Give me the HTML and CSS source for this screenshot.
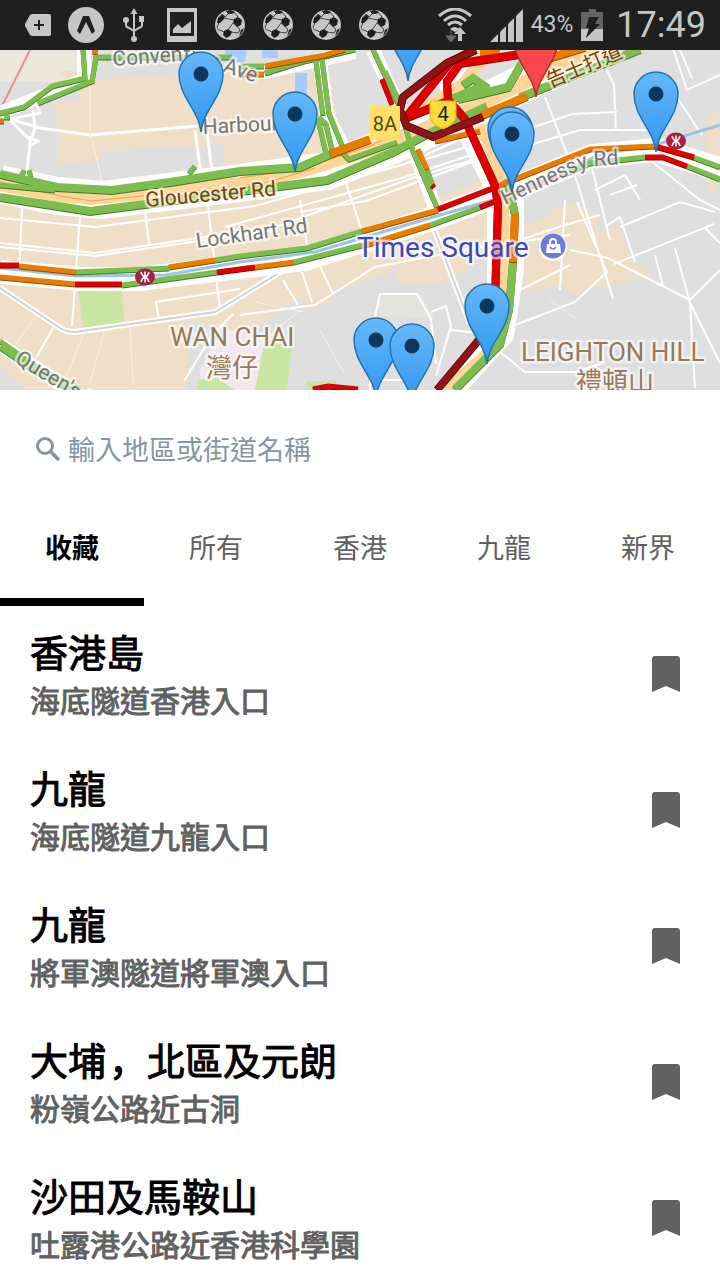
FILE: index.html
```html
<!DOCTYPE html>
<html lang="zh-Hant-HK">
<head>
<meta charset="utf-8">
<meta name="viewport" content="width=device-width, initial-scale=1">
<title>交通</title>
<link rel="stylesheet" href="styles.css">
</head>
<body>
<svg class="defs" width="0" height="0" aria-hidden="true">
  <defs>
    <symbol id="ball" viewBox="0 0 30 30">
      <circle cx="15" cy="15" r="15" fill="#c6c6c6"/>
      <g fill="#1f1f1f">
        <path d="M19 9l4-2 4 3-1 5-4 2-4-4z"/>
        <path d="M9 21l4-2 4 3-2 4-4 2-3-3z"/>
        <path d="M11 1l5-1 4 2-3 2-4 0zM3 8l4-4 3 2-1 3-4 4-3 0zM26 20l3-2-2 5-3 3z"/>
      </g>
      <path d="M9 8l10 2M23 7l-4-5M18 13l-5 7M9 22l-7-3M4 12l-2 6M22 16l3 4M16 22l7 1 2-3M14 3l-4 4" fill="none" stroke="#1f1f1f" stroke-width="0.800"/>
    </symbol>
    <symbol id="bookmark" viewBox="0 0 28 36">
      <path d="M3 0h22a3 3 0 0 1 3 3v33l-14-6-14 6V3a3 3 0 0 1 3-3z" fill="#616161"/>
    </symbol>
    <linearGradient id="blue" x1="0" y1="0" x2="0" y2="1"><stop offset="0" stop-color="#66b8fb"/><stop offset="1" stop-color="#2f98f0"/></linearGradient>
    <g id="pin">
      <path d="M0 0C-2-22-22-35-22-58A22 22 0 0 1 22-58C22-35 2-22 0 0z" fill="url(#blue)" stroke="#2273b0" stroke-width="1.5"/>
      <circle cy="-58" r="7.5" fill="#10375a"/>
    </g>
    <g id="metro">
      <ellipse rx="10" ry="8.500" fill="#a91e45"/>
      <path d="M0-5.500V5.500M-4-5Q-3-1 0 0Q3-1 4-5M-4 5Q-3 1 0 0Q3 1 4 5" fill="none" stroke="#fff" stroke-width="1.5"/>
    </g>
    <path id="hennessy" d="M505 205L573 173Q584 167 596 166L640 163"/>
    <path id="convention" d="M113 66L180 61Q196 61 208 66L262 85"/>
  </defs>
</svg>

<header class="status">
  <div class="notices">
    <svg width="26" height="22" viewBox="0 0 26 22"><path d="M7 0h17a2 2 0 0 1 2 2v18a2 2 0 0 1-2 2H7l-2-1-5-9v-2l5-9z" fill="#c6c6c6"/><path d="M14 6v10M9 11h10" stroke="#1f1f1f" stroke-width="2"/></svg>
    <svg width="36" height="36" viewBox="0 0 36 36"><circle cx="18" cy="18" r="18" fill="#c6c6c6"/><path d="M15 9h6l6 15-3 3-6-12-6 12-3-3z" fill="#1f1f1f"/></svg>
    <svg width="22" height="34" viewBox="0 0 22 34"><path d="M11 0l3.500 6h-7z" fill="#c6c6c6"/><path d="M11 4v26M3 13v4q0 2 3 3l5 3M19 11v6q0 2-3 3l-5 3" fill="none" stroke="#c6c6c6" stroke-width="2"/><circle cx="3" cy="12" r="3" fill="#c6c6c6"/><path d="M16 8h5v6h-5z" fill="#c6c6c6"/><circle cx="11" cy="31" r="3" fill="#c6c6c6"/></svg>
    <svg width="30" height="34" viewBox="0 0 30 34"><path d="M0 0h30v34H0zM3 4v24h24V4z" fill="#c6c6c6" fill-rule="evenodd"/><path d="M5 5h20v21H5z" fill="#1f1f1f"/><path d="M6 25v-4l5-5 4 4 9-7v12z" fill="#c6c6c6"/></svg>
    <svg width="30" height="30"><use href="#ball"/></svg>
    <svg width="30" height="30"><use href="#ball"/></svg>
    <svg width="30" height="30"><use href="#ball"/></svg>
    <svg width="30" height="30"><use href="#ball"/></svg>
  </div>
  <div class="system">
    <svg class="wifi" width="34" height="34" viewBox="0 0 34 34"><g fill="none" stroke="#c6c6c6" stroke-width="3"><path d="M1 8q16-14 32 0M6 13q11-10 22 0M10 17q7-6 14 0"/></g><path d="M12 21q5-4 9 0l-4 3z" fill="#c6c6c6"/><path d="M13 22v7M8 28h10l-5 6z" fill="#6c6c6c" stroke="#6c6c6c" stroke-width="1"/><path d="M22 19l6 7h-4v7h-4v-7h-4z" fill="#c6c6c6"/></svg>
    <svg width="33" height="33" viewBox="0 0 33 33"><path d="M0 33l8-8v8zM10 23l6-6v16h-6zM18 15l6-6v24h-6zM26 7l7-7v33h-7z" fill="#c6c6c6"/></svg>
    <span class="percent">43%</span>
    <svg class="battery" width="22" height="32" viewBox="0 0 22 32"><path d="M8 0h7v3h7v29H0V3h8z" fill="#656565"/><path d="M0 20h22v12H0z" fill="#c6c6c6"/><path d="M8 8h10l-4 7h5L5 29l3-10H5z" fill="#1f1f1f"/></svg>
    <time class="clock">17:49</time>
  </div>
</header>

<svg class="map" viewBox="0 50 720 340" role="img" aria-label="地圖">
  <rect y="50" width="720" height="340" fill="#dfdfdf"/>
  <!-- land use -->
  <path d="M0 50h83v27L58 82 0 82z" fill="#ebe7da"/>
  <g fill="#f0dfc8">
    <path d="M59 71h21v10l160-12 90 10 10 62-30 20-86 12V144L100 152v8l-42 4-2-62 24-1V90z"/>
    <path d="M0 205l90 12 240-30 75-30 85 15V250l-10 8-37 25h-43l-5-13-62 23v9l-20 6-16-10-37 27-10 15-60-20-3 73H32L0 368z"/>
    <path d="M520 228l40-15 37 2v17l23-4 12 32 21 16-58 11-15 10-20-12-35 6zM705 115l15-3v58l-5 26-7-6zM550 210l25-6 25 13-45 10z"/>
  </g>
  <path d="M418 152l72 -25v50l-50 20z" fill="#dfdfdf"/>
  <path d="M375 305l10-10h36l13 23-52-1z" fill="#e4e4de"/>
  <path d="M200 370l12-26 18-14 35 8-5 52h-60z" fill="#f3e6ee"/>
  <path d="M78 289h44l2 35-41 4zM265 338l27 10-5 42h-32zM306 381h30v9h-30zM197 380l20-2 18 12h-38z" fill="#cae6a4"/>
  <path d="M295 73h12v22h-12zM225 50h22l-2 12h-18zM262 50h16v8h-16z" fill="#a5cbff"/>
  <!-- side streets -->
  <g fill="none" stroke="#fff" stroke-width="2">
    <path d="M10 119l30 9 50 7 108-9M10 119l30-6-4-9M28 137l10 4-8 5M33 110l2 18-5 14-3 30" stroke-width="3"/>
    <path d="M10 120l20 20M195 130l6 45M207 132l5 40" stroke-width="3"/>
    <path d="M0 218l95 9 160-21 150-42 90-40M0 243l95 10 180-26 140-50 75-22M0 247l95 9 180-26M22 208l-3 70M80 216l-8 110M145 210l4 34M208 205l12 105M300 200l7 45M345 180l20 60M480 152l-75 25-180 50"/>
    <path d="M155 302l85-13M156 302l3 18M300 212l66-11 114-42M53 328l-17 30M184 381l29-47 20-20M283 280l15 25M302 272l10 30M318 262l15 32M240 315l75-10 60-38 105-20 90-12"/>
    <path d="M400 118l16 44 74-22M0 345l40 20M370 390v-50l10-46h37l14 25 5 45M431 312l15-6 5 20-15 50M380 380h40M450 330l30 3"/>
    <path d="M510 327l65-25 32-30-30-70M520 240l45-15 35-10M520 290l40-20 10-5M565 200l-5 90M570 250l38 8 82 42M614 264l100-40M655 255l8 31M675 248l15 55 5 85M690 300l30-30M705 228l15 15M690 303l30 60M620 227l60-25 35 10M595 190l30-15 15 25M605 227l15-10 15 45"/>
    <path d="M545 97l28 72 40 130M520 132l52-18 45-2M530 145l50-15h70l5-18M607 70l7 15 2 45M720 75l-33 15-30-90M672 90l30 45M590 160l20 80M610 195l27-10M680 50l12 28M650 160l50 40 20 10M500 352l25 20h50l30-10"/>
  </g>
  <g fill="none" stroke="#f9efe2">
    <path d="M90 78v55l12 48M40 310l-35 50M85 330l-20 50M105 328l-15 55M130 325l3 60M300 310l-60 50M305 312l-50-10M320 330l25 45M575 318l-25-18"/>
  </g>
  <g fill="none">
    <path d="M0 288l60 40q6 4 15 4l140-20 90-55M433 226l37 98" stroke="#fff" stroke-width="6"/>
    <path d="M0 288l60 40q6 4 15 4l140-20 90-55M433 226l37 98" stroke="#d4d2cf" stroke-width="2"/>
    <path d="M30 50L0 110" stroke="#e98b90" stroke-width="2"/>
  </g>
  <!-- casings -->
  <g fill="none" stroke="#fff">
    <path d="M0 184l57 12 45 4 138-17 87-12 70-28 83-38 60-30 60-25" stroke-width="38"/>
    <path d="M0 272l80 7h60l165-20 130-41 65-24 92-38 65-6 65 20" stroke-width="24"/>
    <path d="M460 62l-12 20 3 20 45 90v100l-10 50-42 48M515 190v80l-10 65-50 55" stroke-width="18"/>
    <path d="M84 50v30L45 95 0 113M240 70l25 2 90-20M320 60l7 55 15 30M373 50l25 55 38 105M0 345l70 45" stroke-width="14"/>
  </g>
  <g fill="none" stroke="#ffd599">
    <path d="M0 184l57 11 35 3 148-14 60-13 95-29 90-40 60-30 80-30" stroke-width="14"/>
    <path d="M480 125l24 60v105l-14 60-45 40M410 115l50-30 30-30" stroke-width="10"/>
  </g>
  <path d="M0 182l60 14 32 5 118-12 55-6 50-15M240 178l60-9 70-23 40-20" fill="none" stroke="#e6a845"/>
  <path d="M0 268l76 8 90-1 74-13 75-10 125-37 60-17 102-44 53-9 65-20" fill="none" stroke="#9dc3e6" stroke-width="3"/>
  <!-- traffic -->
  <g fill="none">
    <g class="green-edge"><g id="green-wide" class="wide"><path d="M0 175l57 13 55 3 58-8 70-11 60-4 30-13"/><path d="M0 198l90 14 55-7 95-13 87-11 66-28 34-18 60-28"/><path d="M440 105l40-17M458 100l50-12 20-35M520 98l70-28 50-20M463 86l10-7 12 8-5 10"/><path d="M507 180l8 35M513 263l-4 47-9 35-45 45"/></g>
    <g id="green-thin" class="thin"><path d="M0 186l55 5M83 50l2 29-33 8-28 21-24 6M112 58H96l-4 24-54 22M112 58h120M240 67h24M265 74l35-11 55-13M316 62l7 54M322 60l7 54 13 32M318 120l9 38M319 118l7 7 6 25M341 152l8 8 48-17M373 50l25 54 15 48 24 56M385 72l16 34M427 170l6 17M4 118h6M21 178l3-7M31 178l-2-7M189 174l6-7M0 342l40 28 40 20M0 348l35 24 35 18"/><path d="M76 273l93-4M215 261l25-4 67-8 55-17M122 286l95-13M294 263l68-17M430 226l50-18M565 175l25-11 55-6M687 167l33 13M693 158l27 10"/></g></g>
    <g class="green-fill"><use href="#green-wide"/><use href="#green-thin"/></g>
    <g class="orange-edge"><g id="orange-all"><path class="wide" d="M330 155l40-15M515 215l-2 48M480 117l47-20M480 55h20M545 60l40-12"/><path class="thin" d="M0 122h4M95 50v5M240 75h24M265 67l60-11 20-6M418 150l9 20M19 267l57 6M169 268l46-7M362 232l76-21M500 186l90-36 65-3M0 278l75 7M255 268l39-5M362 247l68-21M480 132l-45 10"/></g></g>
    <g class="orange-fill"><use href="#orange-all"/></g>
    <g class="red-edge"><g id="red-all"><path class="wide" d="M405 119l40-16M405 119l45-56 25-13M520 55l-40 6-20 3-13 18 1 18 17 20 30 66 3 20-3 95-8 50"/><path class="thin" d="M382 80l10 25M432 186l2 2M0 266h19M438 210l57-22M75 285h47M217 273l38-5M480 208l20-8M655 147l39 11M645 158h18l24 9M313 390l15-3 30 3"/></g></g>
    <g class="red-fill"><use href="#red-all"/></g>
    <path d="M502 198l62-23" stroke="#ee8d90" stroke-width="5"/>
    <path d="M476 50l-29 13-44 34-3 13 7 16 26 11 50-20M483 335l-46 55" stroke="#5d0b0b" stroke-width="8"/>
    <path d="M476 50l-29 13-44 34-3 13 7 16 26 11 50-20M483 335l-46 55" stroke="#911315" stroke-width="6"/>
  </g>
  <!-- labels -->
  <g class="street">
    <text><textPath href="#convention">Convention Ave</textPath></text>
    <text x="203" y="134" transform="rotate(-3 203 134)">Harbour Rd</text>
    <text x="197" y="248" transform="rotate(-8 197 248)">Lockhart Rd</text>
    <text><textPath href="#hennessy">Hennessy Rd</textPath></text>
    <text x="14" y="362" transform="rotate(31 14 362)">Queen's Rd E</text>
    <text class="highway" x="146" y="207" transform="rotate(-5 146 207)">Gloucester Rd</text>
    <text class="highway-zh" x="550" y="88" transform="rotate(-23 550 88)">告士打道</text>
  </g>
  <g class="district">
    <text x="170" y="346">WAN CHAI</text>
    <text x="206" y="377">灣仔</text>
    <text x="521" y="361">LEIGHTON HILL</text>
    <text x="576" y="391">禮頓山</text>
  </g>
  <text class="place" x="357" y="257">Times Square</text>
  <circle cx="553" cy="247" r="14" fill="#fff"/><circle cx="553" cy="246" r="12.500" fill="#6b7be0"/>
  <path d="M547 244h13l1 9h-15z" fill="#fff"/><path d="M550 245v-3q0-3 3-3t3 3v3" fill="none" stroke="#fff" stroke-width="2"/><path d="M550 247q3 4 6 0" fill="none" stroke="#6b7be0" stroke-width="1.500"/>
  <path d="M370 106h30v34h-30z" fill="#ffe168"/>
  <text class="route" x="385" y="131">8A</text>
  <path d="M430 101h26v15q-1 9-13 13-12-4-13-13z" fill="#ffdc3a" stroke="#dcb42c"/>
  <text class="shield" x="443" y="121">4</text>
  <use href="#metro" x="145" y="277"/>
  <use href="#metro" x="676" y="141"/>
  <!-- camera pins -->
  <use href="#pin" x="201" y="132"/>
  <use href="#pin" x="295" y="172"/>
  <use href="#pin" x="408" y="81"/>
  <path d="M536 97C534 75 514 62 514 39h44C558 62 538 75 536 97z" fill="#f8484d" stroke="#b6292e" stroke-width="1.500"/>
  <use href="#pin" x="510" y="187"/>
  <use href="#pin" x="512" y="192"/>
  <use href="#pin" x="656" y="152"/>
  <use href="#pin" x="487" y="364"/>
  <use href="#pin" x="376" y="398"/>
  <use href="#pin" x="412" y="404"/>
</svg>

<main class="panel">
  <form class="search">
    <label for="query" aria-label="搜尋"><svg width="24" height="24" viewBox="0 0 24 24"><circle cx="9" cy="9" r="7.500" fill="none" stroke="#8795a1" stroke-width="3"/><path d="M14 14l9 9" stroke="#8795a1" stroke-width="3.500"/></svg></label>
    <input id="query" type="text" placeholder="輸入地區或街道名稱">
  </form>
  <nav class="tabs">
    <button type="button" class="tab active">收藏</button>
    <button type="button" class="tab">所有</button>
    <button type="button" class="tab">香港</button>
    <button type="button" class="tab">九龍</button>
    <button type="button" class="tab">新界</button>
  </nav>
  <ul class="list">
    <li class="row"><div class="camera"><h2>香港島</h2><p>海底隧道香港入口</p></div><button type="button" aria-label="取消收藏"><svg width="28" height="36"><use href="#bookmark"/></svg></button></li>
    <li class="row"><div class="camera"><h2>九龍</h2><p>海底隧道九龍入口</p></div><button type="button" aria-label="取消收藏"><svg width="28" height="36"><use href="#bookmark"/></svg></button></li>
    <li class="row"><div class="camera"><h2>九龍</h2><p>將軍澳隧道將軍澳入口</p></div><button type="button" aria-label="取消收藏"><svg width="28" height="36"><use href="#bookmark"/></svg></button></li>
    <li class="row"><div class="camera"><h2>大埔<span class="comma" lang="zh-Hans">，</span>北區及元朗</h2><p>粉嶺公路近古洞</p></div><button type="button" aria-label="取消收藏"><svg width="28" height="36"><use href="#bookmark"/></svg></button></li>
    <li class="row"><div class="camera"><h2>沙田及馬鞍山</h2><p>吐露港公路近香港科學園</p></div><button type="button" aria-label="取消收藏"><svg width="28" height="36"><use href="#bookmark"/></svg></button></li>
  </ul>
</main>
</body>
</html>
```
FILE: styles.css
```css
* { box-sizing: border-box; }
body {
  margin: 0;
  height: 100vh;
  display: flex;
  flex-direction: column;
  overflow: hidden;
  background: #fff;
  font-family: Roboto, "Noto Sans CJK TC", sans-serif;
}
.defs { position: absolute; }
button { border: 0; padding: 0; background: none; font: inherit; cursor: pointer; }

.status {
  flex: none;
  min-height: 50px;
  display: flex;
  justify-content: space-between;
  align-items: center;
  padding: 0 14px;
  background: #1f1f1f;
  color: #c6c6c6;
}
.notices { display: grid; grid-template-columns: repeat(8, 48px); place-items: center; }
.system { display: flex; align-items: center; gap: 8px; }
.system svg { flex: none; }
.system .wifi { margin-right: 10px; }
.system .battery { margin-right: 5px; }
.percent { font-size: 23px; line-height: 32px; }
.clock { font-size: 36px; line-height: 44px; }

.map { flex: none; display: block; width: 100%; height: auto; }
.map .wide { stroke-width: 8px; }
.map .thin { stroke-width: 5px; }
.green-edge { stroke: #3f7826; }
.orange-edge { stroke: #8f4c00; }
.red-edge { stroke: #8a0000; }
.green-fill { stroke: #7dbd4f; }
.orange-fill { stroke: #e67c00; }
.red-fill { stroke: #dc0000; }
.green-fill, .orange-fill, .red-fill { transform: translateY(-1px); }
.map text { paint-order: stroke; stroke: rgba(255, 255, 255, 0.6); stroke-width: 5px; stroke-linejoin: round; }
.street { font-size: 21px; fill: #757575; }
.street .highway { fill: #804000; }
.street .highway-zh { fill: #804000; font-size: 20px; }
.district { font-size: 26px; fill: #987a57; }
.map .place { font-size: 28px; fill: #3949bd; }
.map .route, .map .shield { stroke: none; text-anchor: middle; font-size: 20px; fill: #57491c; }
.map .shield { fill: #222; }

.panel { flex: 1; min-height: 0; display: flex; flex-direction: column; }
.search { flex: none; display: flex; align-items: center; gap: 8px; padding: 30px 36px 18px; }
.search label { display: flex; }
.search input {
  flex: 1;
  min-width: 0;
  height: 58px;
  padding: 0 0 2px;
  border: 0;
  outline: 0;
  background: none;
  font: 27px "Noto Sans CJK TC", sans-serif;
  color: #333;
}
.search input::placeholder { color: #8795a1; opacity: 1; }

.tabs { flex: none; display: flex; }
.tab {
  flex: 1;
  height: 110px;
  padding-bottom: 2px;
  border-bottom: 8px solid transparent;
  font-size: 27px;
  color: #616161;
}
.tab.active { color: #000; font-weight: 700; border-color: #000; }

.list { flex: 1; min-height: 0; margin: 0; padding: 0; list-style: none; overflow-y: auto; scrollbar-width: none; }
.row { display: flex; justify-content: space-between; align-items: center; padding: 18px 40px 18px 30px; }
.camera { padding-bottom: 4px; }
.row h2, .row p { margin: 0; font-family: "Noto Sans CJK TC", sans-serif; font-weight: 400; }
.row h2 { font-size: 38px; line-height: 54px; color: #000; -webkit-text-stroke: 1px #000; }
.row p { font-size: 30px; line-height: 42px; color: #616161; -webkit-text-stroke: 1px #616161; }
.comma { padding-left: 3px; font-family: "Noto Sans CJK SC", sans-serif; line-height: 0; }
.row svg { display: block; }
```
